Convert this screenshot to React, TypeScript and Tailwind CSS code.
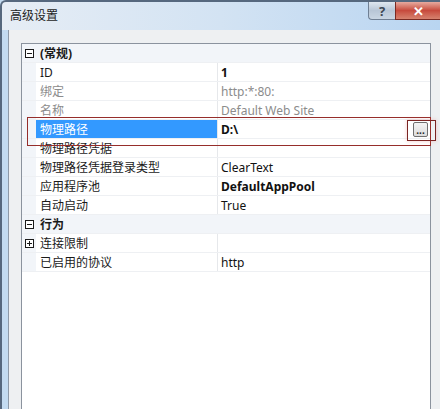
import React from "react";

type Row = {
  name: string;
  value?: string;
  kind?: "cat" | "normal";
  box?: "minus" | "plus";
  muted?: boolean;
  bold?: boolean;
  selected?: boolean;
  button?: boolean;
};

const rows: Row[] = [
  { name: "(常规)", kind: "cat", box: "minus" },
  { name: "ID", value: "1", bold: true },
  { name: "绑定", value: "http:*:80:", muted: true },
  { name: "名称", value: "Default Web Site", muted: true },
  { name: "物理路径", value: "D:\\", bold: true, selected: true, button: true },
  { name: "物理路径凭据", value: "" },
  { name: "物理路径凭据登录类型", value: "ClearText" },
  { name: "应用程序池", value: "DefaultAppPool", bold: true },
  { name: "自动启动", value: "True" },
  { name: "行为", kind: "cat", box: "minus" },
  { name: "连接限制", value: "", box: "plus" },
  { name: "已启用的协议", value: "http" },
];

const ToggleBox = ({ type }: { type: "minus" | "plus" }) => (
  <svg width="9" height="9" viewBox="0 0 9 9">
    <rect x="0.5" y="0.5" width="8" height="8" fill="white" stroke="#1a1a1a" />
    <line x1="2" y1="4.5" x2="7" y2="4.5" stroke="#1a1a1a" />
    {type === "plus" && <line x1="4.5" y1="2" x2="4.5" y2="7" stroke="#1a1a1a" />}
  </svg>
);

const GridRow = ({ row }: { row: Row }) => {
  if (row.kind === "cat") {
    return (
      <div className="flex h-[19px] items-center border-b border-[#eef0f3] bg-[#f2f5f9]">
        <div className="flex w-[14px] justify-center">
          {row.box && <ToggleBox type={row.box} />}
        </div>
        <span className="pl-[4px] pt-[2px] font-bold text-[#1a1a1a]">{row.name}</span>
      </div>
    );
  }
  return (
    <div className="flex h-[19px] border-b border-[#eef0f3]">
      <div className="flex w-[14px] items-center justify-center bg-[#f2f5f9]">
        {row.box && <ToggleBox type={row.box} />}
      </div>
      <div
        className={`flex w-[182px] items-center border-r border-[#e6e8eb] pl-[4px] pt-[2px] ${
          row.selected
            ? "bg-[#3399ff] text-white"
            : row.muted
            ? "text-[#8c8c8c]"
            : "text-[#1a1a1a]"
        }`}
      >
        {row.name}
      </div>
      <div
        className={`flex flex-1 items-center pl-[3px] pt-[2px] ${
          row.muted ? "text-[#8c8c8c]" : "text-[#111]"
        } ${row.bold ? "font-bold" : ""}`}
      >
        {row.value}
        {row.button && (
          <div className="mb-[1px] ml-auto mr-[2px] flex h-[15px] w-[15px] items-end justify-center rounded-[2px] border border-[#707070] bg-gradient-to-b from-[#f5f5f5] to-[#dcdcdc] pb-[2px] text-[10px] font-bold leading-[8px] text-[#222]">
            ...
          </div>
        )}
      </div>
    </div>
  );
};

const App = () => {
  return (
    <div className="relative h-[409px] w-[440px] overflow-hidden bg-[#c3dbf1] font-['Noto_Sans','Noto_Sans_CJK_SC',sans-serif] text-[12px] leading-[16px]">
      {/* title bar */}
      <div className="flex h-[30px] rounded-tl-[6px] border-l-2 border-t-2 border-[#56687e] bg-gradient-to-r from-[#e6edf5] via-[#d3e3f3] to-[#b9d5f1]">
        <span className="ml-[8px] mt-[5px] font-['Noto_Sans_CJK_SC',sans-serif] text-[12px] text-[#1c1c1c]">
          高级设置
        </span>
        <div className="ml-auto flex h-[18px]">
          <div className="flex w-[27px] items-center justify-center rounded-bl-[4px] border-b border-l border-[#6f7f93] bg-gradient-to-b from-[#dfe7ef] via-[#b8c6d6] to-[#c9d6e3] text-[13px] font-bold text-[#3c4652]">
            ?
          </div>
          <div className="flex w-[45px] items-center justify-center border-b border-l border-[#7a2a22] bg-gradient-to-b from-[#e6aa9f] via-[#c74a3d] to-[#d6826f] text-[13px] font-bold text-white">
            ✕
          </div>
        </div>
      </div>

      {/* body */}
      <div className="flex h-[379px]">
        <div className="w-[8px] border-l-2 border-[#56687e] bg-[#c3dbf1]" />
        <div className="flex-1 border-l border-[#8e9aa8] bg-[#eef0f2] pl-[12px] pr-[9px] pt-[13px]">
          <div className="h-[380px] border border-[#8b939e] bg-white">
            {rows.map((row, i) => (
              <GridRow key={i} row={row} />
            ))}
          </div>
        </div>
      </div>

      {/* red annotation */}
      <div className="absolute left-[27px] top-[117px] h-[29px] w-[404px] border border-[#962e2b]" />
      <div className="absolute left-[407px] top-[120px] h-[21px] w-[29px] border border-[#7a2422] shadow-[0_0_4px_rgba(230,120,120,0.4)]" />
    </div>
  );
};

export default App;
